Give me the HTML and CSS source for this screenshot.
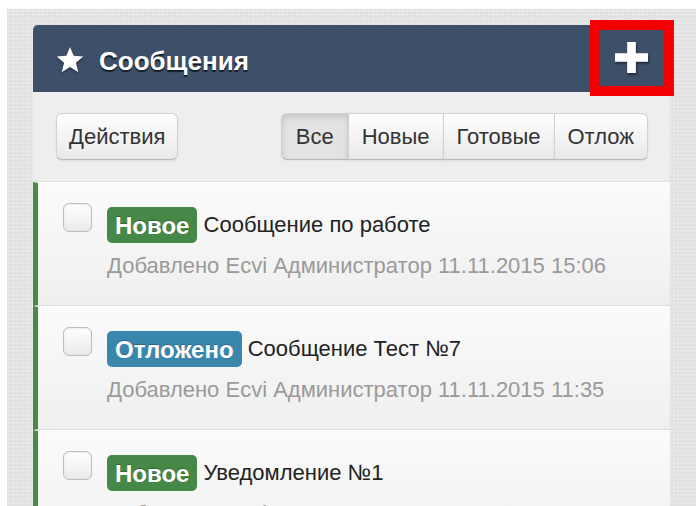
FILE: index.html
```html
<!DOCTYPE html>
<html lang="ru">
<head>
<meta charset="utf-8">
<title>Сообщения</title>
<link rel="stylesheet" href="styles.css">
</head>
<body>
<div class="page">
  <section class="panel">
    <header class="panel-head">
      <h2 class="panel-title">
        <svg class="star" viewBox="0 0 24 24" aria-hidden="true"><path d="M12 .8l3.2 7.6 8.2.6-6.3 5.4 2 8-7.1-4.3-7.1 4.3 2-8L.6 9l8.2-.6z"/></svg>
        Сообщения
      </h2>
      <button class="add-btn" type="button" aria-label="Добавить">
        <svg viewBox="0 0 34 32" aria-hidden="true"><path d="M12.5 0h9v11.5H34v9H21.5V32h-9V20.5H0v-9h12.5z"/></svg>
      </button>
      <span class="highlight"></span>
    </header>
    <div class="toolbar">
      <button class="btn" type="button">Действия</button>
      <div class="btn-group">
        <button class="btn active" type="button">Все</button>
        <button class="btn" type="button">Новые</button>
        <button class="btn" type="button">Готовые</button>
        <button class="btn" type="button">Отлож</button>
      </div>
    </div>
    <ul class="messages">
      <li class="message">
        <span class="check"></span>
        <div class="message-body">
          <div class="message-title"><span class="label label-new">Новое</span> Сообщение по работе</div>
          <div class="message-meta">Добавлено Ecvi Администратор 11.11.2015 15:06</div>
        </div>
      </li>
      <li class="message">
        <span class="check"></span>
        <div class="message-body">
          <div class="message-title"><span class="label label-later">Отложено</span> Сообщение Тест №7</div>
          <div class="message-meta">Добавлено Ecvi Администратор 11.11.2015 11:35</div>
        </div>
      </li>
      <li class="message">
        <span class="check"></span>
        <div class="message-body">
          <div class="message-title"><span class="label label-new">Новое</span> Уведомление №1</div>
          <div class="message-meta">Добавлено Ecvi Администратор 11.11.2015 11:22</div>
        </div>
      </li>
    </ul>
  </section>
</div>
</body>
</html>
```

FILE: styles.css
```css
html, body {
  margin: 0;
  height: 100%;
  background: #fff;
  overflow: hidden;
}

body {
  font-family: "Liberation Sans", Arial, sans-serif;
}

.page {
  margin: 9px 0 0 7px;
  padding: 16px 26px 0 26px;
  height: 100%;
  box-sizing: border-box;
  background-color: #e2e2e2;
  background-image:
    radial-gradient(rgba(255,255,255,.35) 0.8px, transparent 1.2px),
    radial-gradient(rgba(0,0,0,.035) 0.8px, transparent 1.2px);
  background-size: 3px 4px, 5px 3px;
  background-position: 0 0, 1px 2px;
}

.panel {
  width: 637px;
}

/* dark title bar */
.panel-head {
  position: relative;
  height: 67px;
  display: flex;
  align-items: center;
  justify-content: space-between;
  padding: 0 7px 0 23px;
  background: #3e4f69;
  border-radius: 5px 5px 0 0;
}

.panel-title {
  margin: 5px 0 0;
  display: flex;
  align-items: center;
  gap: 15px;
  color: #fff;
  font-size: 26px;
  font-weight: bold;
  text-shadow: 0 2px 1px #151c28;
}

.star {
  width: 28px;
  height: 28px;
  margin-top: -3px;
  fill: #fff;
  filter: drop-shadow(0 1px 1px rgba(0,0,0,.5));
}

.add-btn {
  width: 63px;
  height: 55px;
  margin-top: -3px;
  padding: 0;
  border: 0;
  background: transparent;
  display: flex;
  align-items: center;
  justify-content: center;
}

.add-btn svg {
  width: 33px;
  height: 31px;
  fill: #fff;
  filter: drop-shadow(1px 2px 1px rgba(0,0,0,.45));
}

/* red frame drawn over the add button */
.highlight {
  position: absolute;
  left: 557px;
  top: -5px;
  width: 84px;
  height: 76px;
  box-sizing: border-box;
  border: 10px solid #f20000;
}

/* filter toolbar */
.toolbar {
  display: flex;
  justify-content: space-between;
  padding: 21px 22px 21px 23px;
  background: #eeeeee;
  border-bottom: 1px solid #dedede;
}

.btn {
  height: 47px;
  padding: 0 12px;
  font-family: inherit;
  font-size: 22px;
  color: #333;
  background: linear-gradient(#ffffff, #e8e8e8);
  border: 1px solid #d2d2d2;
  border-bottom-color: #b8b8b8;
  border-radius: 6px;
  box-shadow: inset 0 1px 0 rgba(255,255,255,.3), 0 1px 2px rgba(0,0,0,.08);
}

.btn-group {
  display: flex;
}

.btn-group .btn {
  border-radius: 0;
  margin-left: -1px;
  padding: 0 13px;
}

.btn-group .btn:first-child {
  border-radius: 6px 0 0 6px;
  margin-left: 0;
  padding: 0 14px;
}

.btn-group .btn:last-child {
  border-radius: 0 6px 6px 0;
}

.btn.active {
  background: #e3e3e3;
  box-shadow: inset 0 3px 6px rgba(0,0,0,.13), 0 1px 2px rgba(0,0,0,.05);
}

/* message list */
.messages {
  list-style: none;
  margin: 0;
  padding: 0;
}

.message {
  height: 124px;
  display: flex;
  align-items: flex-start;
  gap: 15px;
  padding: 20px 0 0 25px;
  border-left: 5px solid #4b8a45;
  border-top: 1px solid #fff;
  border-bottom: 1px solid #dcdcdc;
  background: linear-gradient(#fbfbfb, #efefef);
  box-sizing: border-box;
}

.check {
  flex: none;
  width: 29px;
  height: 29px;
  box-sizing: border-box;
  border: 1px solid #bdbdbd;
  border-radius: 6px;
  background: linear-gradient(#ffffff, #eaeaea);
  box-shadow: inset 0 1px 2px rgba(0,0,0,.08);
}

.message-body {
  padding-top: 4px;
}

.message-title {
  font-size: 22px;
  color: #222;
  line-height: 36px;
}

.label {
  display: inline-block;
  height: 36px;
  line-height: 37px;
  padding: 0 8px;
  border-radius: 5px;
  color: #fff;
  font-weight: bold;
  font-size: 24px;
  text-shadow: 0 -1px 0 rgba(0,0,0,.25);
  vertical-align: top;
}

.label-new {
  background: #468847;
}

.label-later {
  background: #3a87ad;
}

.message-meta {
  margin-top: 8px;
  font-size: 22px;
  line-height: 30px;
  color: #9a9a9a;
}
```
